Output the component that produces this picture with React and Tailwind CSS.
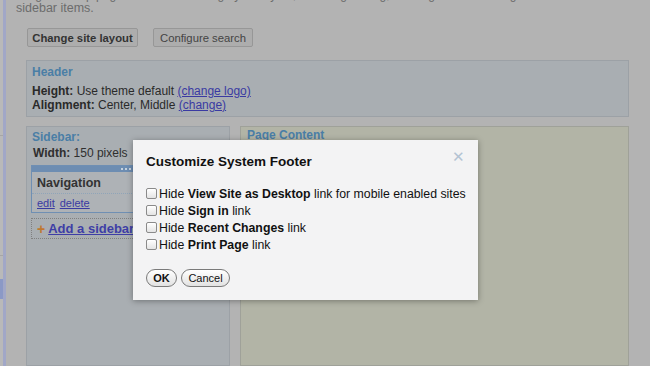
import React from "react";

function Check() {
  return (
    <span className="inline-block w-[11px] h-[11px] shrink-0 border border-[#8a8a8a] rounded-[2px] bg-gradient-to-b from-white to-[#e4e4e4] shadow-[inset_0_1px_0_#fff]" />
  );
}

function Row({ bold, rest }) {
  return (
    <div className="flex items-center h-[17px]">
      <Check />
      <span className="ml-[2px] whitespace-nowrap text-[#111]">
        Hide <b>{bold}</b> {rest}
      </span>
    </div>
  );
}

export default function App() {
  return (
    <div
      className="relative w-[650px] h-[366px] overflow-hidden bg-[#b3b3b3] flex"
      style={{ fontFamily: '"Liberation Sans", Arial, sans-serif' }}
    >
      {/* left strip */}
      <div className="w-[3px] h-full bg-[#b9b9b9] flex flex-col shrink-0">
        <div className="h-[135px]" />
        <div className="h-px bg-[#a6a6a6]" />
        <div className="h-[119px]" />
        <div className="h-px bg-[#a6a6a6]" />
        <div className="h-[23px]" />
        <div className="h-[20px] bg-[#8b99c6]" />
      </div>
      <div className="w-[3px] h-full bg-[#a1a7c7] shrink-0" />

      {/* main */}
      <div className="flex-1 flex flex-col pl-[10px] text-[12px] leading-[14px] text-[#2a2a2a]">
        <div className="mt-[-11px] text-[#6c6c6c] whitespace-nowrap leading-[13px]">
          <div>Drag and drop page elements to change your layout, including adding, deleting and reordering</div>
          <div className="text-[12.5px]">sidebar items.</div>
        </div>

        <div className="flex gap-[15px] ml-[11px] mt-[13px]">
          <div className="h-[19px] w-[111px] flex items-center justify-center border border-[#979797] bg-[#adadad] text-[11.3px] font-bold text-[#333] rounded-[2px]">
            Change site layout
          </div>
          <div className="h-[19px] w-[100px] flex items-center justify-center border border-[#979797] bg-[#adadad] text-[11.3px] text-[#444] rounded-[2px]">
            Configure search
          </div>
        </div>

        {/* Header box */}
        <div className="ml-[10px] mt-[13px] w-[603px] h-[57px] border border-[#9ca1a6] bg-[#a9aeb2] px-[5px] pt-[4px]">
          <div className="font-bold text-[#4a7ea6]">Header</div>
          <div className="mt-[5px]">
            <b>Height:</b> Use theme default{" "}
            <span className="text-[#3a3aa2] underline">(change logo)</span>
          </div>
          <div>
            <b>Alignment:</b> Center, Middle{" "}
            <span className="text-[#3a3aa2] underline">(change)</span>
          </div>
        </div>

        {/* Columns */}
        <div className="ml-[10px] mt-[9px] flex gap-[10px] flex-1">
          <div className="w-[204px] border border-[#9ca1a6] bg-[#a9aeb2] px-[4px] pt-[3px]">
            <div className="font-bold text-[#4a7ea6] ml-[1px]">Sidebar:</div>
            <div className="ml-[2px] mt-[2px] text-[#2f2f2f]">
              <b>Width:</b> 150 pixels
            </div>
            <div className="mt-[5px] border border-[#6f8fb3] bg-[#aeb2b6]">
              <div className="h-[6px] bg-[#6d8db2] flex justify-center items-center gap-[2px]">
                <span className="w-[2px] h-[2px] bg-[#c6d2de]" />
                <span className="w-[2px] h-[2px] bg-[#c6d2de]" />
                <span className="w-[2px] h-[2px] bg-[#c6d2de]" />
                <span className="w-[2px] h-[2px] bg-[#c6d2de]" />
              </div>
              <div className="px-[5px] pt-[4px] pb-[3px] font-bold text-[12.5px] text-[#333] border-b border-dotted border-[#8fa4b8]">
                Navigation
              </div>
              <div className="px-[5px] pt-[2px] pb-[2px] text-[11px] text-[#3a3aa2]">
                <span className="underline">edit</span>
                <span className="underline ml-[5px]">delete</span>
              </div>
            </div>
            <div className="mt-[5px] h-[21px] border border-dotted border-[#808080] flex items-center px-[5px]">
              <span className="text-[#c07830] font-bold text-[14px]">+</span>
              <span className="ml-[3px] text-[#3e3ea6] font-bold underline text-[13px] whitespace-nowrap">
                Add a sidebar item
              </span>
            </div>
          </div>
          <div className="w-[389px] border border-[#9fa199] bg-[#b2b4a6] px-[6px] pt-[1px]">
            <div className="font-bold text-[#4a7ea6]">Page Content</div>
          </div>
        </div>
      </div>

      {/* Modal */}
      <div className="absolute left-[133px] top-[140px] w-[345px] h-[160px] bg-[#f3f3f4] shadow-[0_1px_6px_rgba(0,0,0,0.35)] px-[13px] text-[12.3px] leading-[14px]">
        <div className="absolute right-[13px] top-[9px] text-[#b3c3d3] text-[15px] leading-none">
          ✕
        </div>
        <div className="mt-[14px] font-bold text-[13.5px] leading-[16px] text-[#111]">
          Customize System Footer
        </div>
        <div className="mt-[15px] flex flex-col">
          <Row bold="View Site as Desktop" rest="link for mobile enabled sites" />
          <Row bold="Sign in" rest="link" />
          <Row bold="Recent Changes" rest="link" />
          <Row bold="Print Page" rest="link" />
        </div>
        <div className="mt-[16px] flex gap-[4px]">
          <div className="h-[18px] w-[31px] rounded-full border border-[#7a7a7a] bg-gradient-to-b from-white to-[#e2e2e2] flex items-center justify-center text-[11px] font-bold text-[#111]">
            OK
          </div>
          <div className="h-[18px] w-[49px] rounded-full border border-[#7a7a7a] bg-gradient-to-b from-white to-[#e2e2e2] flex items-center justify-center text-[11px] text-[#111]">
            Cancel
          </div>
        </div>
      </div>
    </div>
  );
}
